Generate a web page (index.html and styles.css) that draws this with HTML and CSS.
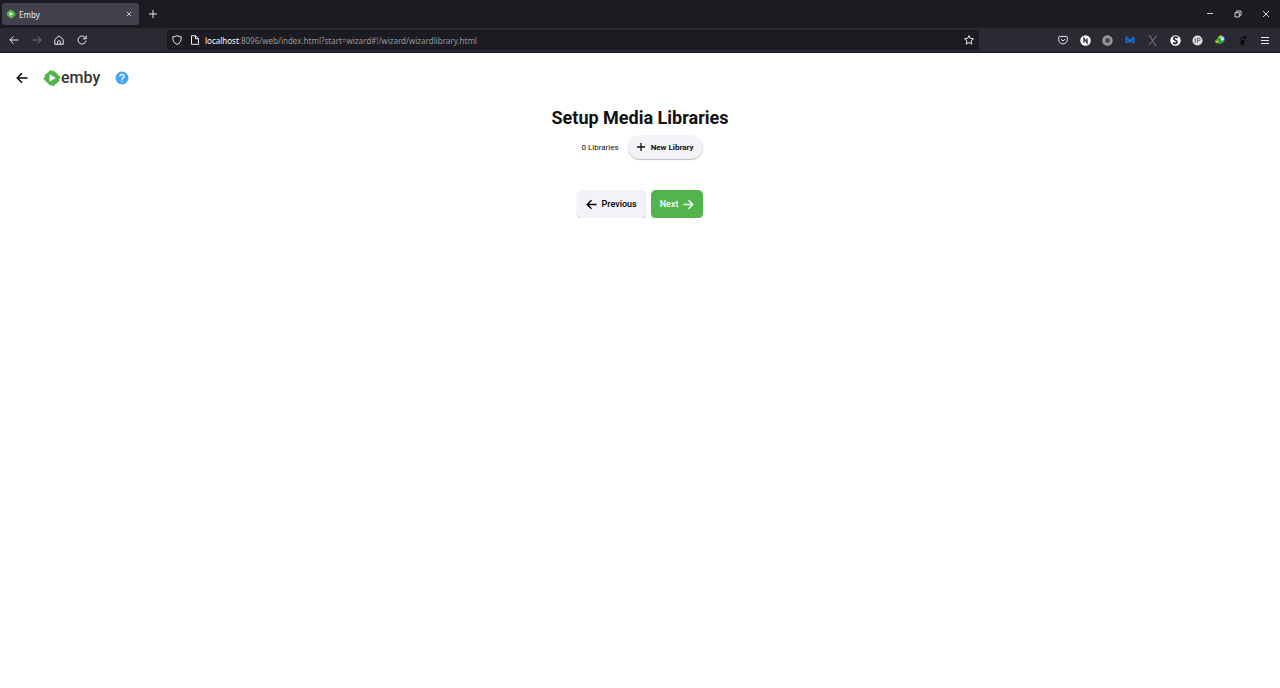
FILE: index.html
```html
<!DOCTYPE html>
<html lang="en">
<head>
<meta charset="utf-8">
<title>Emby</title>
<link rel="stylesheet" href="styles.css">
</head>
<body>
<div class="browser">
  <div class="tabbar">
    <div class="tab">
      <svg class="favicon" viewBox="0 0 20 20"><path fill="#52b54b" d="M8.800.8l2.100 2L12 1.700l7.800 7.700-2.200 2.200 1.100 1.100-7.500 6.700-2-2-1.100 1.100L.3 10.700l2.200-2.100-1.200-1.200z"/><path fill="#fff" d="M7.300 5.900v8l7-4z"/></svg>
      <span class="tab-title">Emby</span>
      <button class="tab-close" aria-label="Close tab"><svg class="i6" viewBox="0 0 6 6"><path d="M.8.8l4.400 4.400M5.200.8L.8 5.200"/></svg></button>
    </div>
    <button class="tab-new" aria-label="New tab"><svg class="i8" viewBox="0 0 8 8"><path d="M4 0v8M0 4h8"/></svg></button>
    <div class="window-controls">
      <button aria-label="Minimize"><svg class="i8" viewBox="0 0 8 8"><path d="M1 3.500h6"/></svg></button>
      <button aria-label="Restore"><svg class="i8" viewBox="0 0 8 8"><path d="M1 2.700h4.300V7H1zM2.700 2.500V1H7v4.300H5.500"/></svg></button>
      <button aria-label="Close"><svg class="i8" viewBox="0 0 8 8"><path d="M1 1l6 6M7 1L1 7"/></svg></button>
    </div>
  </div>
  <div class="toolbar">
    <div class="nav">
      <button aria-label="Back"><svg class="i10" viewBox="0 0 10 10"><path d="M9.500 5H.8M4.500 1.300L.8 5l3.700 3.700"/></svg></button>
      <button class="dim" aria-label="Forward"><svg class="i10" viewBox="0 0 10 10"><path d="M.5 5h8.700M5.500 1.300L9.200 5 5.500 8.700"/></svg></button>
      <button aria-label="Home"><svg class="i10" viewBox="0 0 10 10"><path d="M.8 9.300V4.500L5 .8l4.200 3.700v4.800zM3.600 9V6.400Q5 4.800 6.400 6.400V9"/></svg></button>
      <button aria-label="Reload"><svg class="i10" viewBox="0 0 10 10"><path d="M8.600 3.200A4 4 0 1 0 9 5.600M9.200.5v3.300H5.900"/></svg></button>
    </div>
    <div class="urlbar">
      <svg class="i10" viewBox="0 0 10 10"><path d="M5 .6q2 1.200 4.200 1.200Q9.600 7.500 5 9.500.4 7.500.8 1.800 3 1.800 5 .6z"/></svg>
      <svg class="i10 page-icon" viewBox="0 0 10 10"><path d="M1.500.7h4L8.500 3.600v5.700h-7zM5.500.8v3h3"/></svg>
      <label class="address"><span>localhost</span><input type="text" aria-label="Address" value=":8096/web/index.html?start=wizard#!/wizard/wizardlibrary.html"></label>
      <button aria-label="Bookmark"><svg class="i10" viewBox="0 0 10 10"><path d="M5 .6l1.300 2.900 3.200.3-2.400 2.100.7 3.200L5 7.500 2.200 9.100l.7-3.200L.5 3.800l3.200-.3z"/></svg></button>
    </div>
    <div class="extensions">
      <button aria-label="Pocket"><svg class="i10" viewBox="0 0 10 10"><path d="M1.500 1.400h7q.8 0 .8.800v2.400a4.300 4.300 0 0 1-8.600 0V2.200q0-.8.8-.8zM2.900 4.100L5 6l2.100-1.900"/></svg></button>
      <button aria-label="Notes"><svg class="i11" viewBox="0 0 12 12"><circle class="white" cx="6" cy="6" r="5.700"/><path class="ink" d="M4.300 8.500v-5l3.400 5v-5"/></svg></button>
      <button aria-label="Recorder"><svg class="i11" viewBox="0 0 12 12"><circle fill="#45444c" stroke="#979797" stroke-width="3" cx="6" cy="6" r="4.200"/></svg></button>
      <button aria-label="Malwarebytes"><svg class="i10" viewBox="0 0 10 10"><path class="blue" d="M2.200 8.200Q0 5.500 1.700 2.500L5 5.900l3.300-3.400Q10 5.500 7.800 8.200M3.500 4.500v3M6.500 4.500v3"/></svg></button>
      <button aria-label="X"><svg class="i11" viewBox="0 0 12 12"><path class="grey" d="M1.500 1h1.700L9 11h1.500M10.500 1L2 11"/></svg></button>
      <button aria-label="Stylus"><svg class="i11" viewBox="0 0 12 12"><circle class="white" cx="6" cy="6" r="5.700"/><path class="ink s" d="M8.500 3Q5 1.500 4 3.500c-.8 2 3.700 2.200 3.700 4S5 9.700 3.300 8.500"/></svg></button>
      <button aria-label="IP lookup"><svg class="i11" viewBox="0 0 12 12"><circle fill="#dedede" stroke="none" cx="6" cy="6" r="5.500"/><path stroke="#555" d="M3.500 3.500v5M5.800 8.500v-5h1.500q1.700 0 1.700 1.300T7.300 6.200H6"/></svg></button>
      <button aria-label="Download manager"><svg class="i10" viewBox="0 0 10 10"><circle fill="#327bd0" stroke="none" cx="6.300" cy="4.200" r="3.500"/><path fill="#e5e9e8" stroke="none" d="M5.500 2.500l3-.5L9 5 6.500 6z"/><path fill="#e1c51b" stroke="none" d="M3.500 1.500Q5.500 0 7.500 1L6 3 3 3.500z"/><path fill="#24a72d" stroke="none" d="M0 5.500l3-3L6 4 5 6l3.500.5L6 9 1 8.500 2.500 7z"/><path fill="#e1c51b" stroke="none" d="M0 6l3-.5L4 7 1 8z"/></svg></button>
      <button aria-label="Gnome"><svg class="i11" viewBox="0 0 12 12"><path fill="#0b0b0d" stroke="none" d="M10 1Q7 .5 6.500 2.800 7 5 9 3.800T10 1z"/><ellipse class="black" cx="5.200" cy="3.300" rx=".7" ry="1.200"/><ellipse class="black" cx="3.700" cy="4.300" rx=".6" ry="1"/><ellipse class="black" cx="2.500" cy="5.700" rx=".6" ry=".9"/><path fill="#0b0b0d" stroke="none" d="M3.300 7q2.200-2.500 4.800-1.500 1.500 1.400-.4 2.700Q9 9.800 7 11.200 4.500 12 4 9.500 3.800 8.300 3.300 7z"/></svg></button>
      <button aria-label="Menu"><svg class="i8" viewBox="0 0 8 8"><path d="M0 1.500h8M0 4.500h8M0 7.500h8"/></svg></button>
    </div>
  </div>
</div>
<header class="app-header">
  <button class="back" aria-label="Back"><svg class="i12 thick" viewBox="0 0 12 12"><path d="M11.500 6H1.500M6 1.300L1.300 6 6 10.700"/></svg></button>
  <a class="logo" href="#" aria-label="emby home"><svg class="logo-mark" viewBox="0 0 20 20"><path fill="#52b54b" d="M8.800.8l2.100 2L12 1.700l7.800 7.700-2.200 2.200 1.100 1.100-7.500 6.700-2-2-1.100 1.100L.3 10.700l2.200-2.100-1.200-1.200z"/><path fill="#fff" d="M7.300 5.900v8l7-4z"/></svg><span>emby</span></a>
  <a class="help" href="#" aria-label="Help"><svg class="help-icon" viewBox="0 0 14 14"><circle fill="#42a5f5" cx="7" cy="7" r="6.500"/><path fill="none" stroke="#fff" stroke-width="1.300" d="M4.900 5.500q0-2 2.100-2t2.100 1.900C9.100 6.800 7 6.800 7 8.700"/><path fill="#fff" d="M6.300 9.700h1.400v1.400H6.300z"/></svg></a>
</header>
<main class="wizard">
  <h1>Setup Media Libraries</h1>
  <div class="libraries">
    <span>0 Libraries</span>
    <button class="new-library"><svg class="i8" viewBox="0 0 8 8"><path d="M4 0v8M0 4h8"/></svg>New Library</button>
  </div>
  <div class="actions">
    <button class="step"><svg class="i11 thick" viewBox="0 0 12 12"><path d="M11.500 6H1.500M6 1.300L1.300 6 6 10.700"/></svg>Previous</button>
    <button class="step next">Next<svg class="i11 thick" viewBox="0 0 12 12"><path d="M.5 6h10M6 1.300L10.700 6 6 10.700"/></svg></button>
  </div>
</main>
</body>
</html>
```
FILE: styles.css
```css
* { box-sizing: border-box; }
body { margin: 0; background: #fff; color: #111; font-family: Roboto, sans-serif; }
button { display: flex; align-items: center; justify-content: center; padding: 0; border: 0; background: none; color: inherit; font: inherit; }
svg { display: block; flex: none; fill: none; stroke: currentColor; stroke-width: 1; }
a { color: inherit; text-decoration: none; }
.i6 { width: 6px; height: 6px; }
.i8 { width: 8px; height: 8px; }
.i10 { width: 10px; height: 10px; }
.i11 { width: 11px; height: 11px; }
.i12 { width: 12px; height: 12px; }
.thick { stroke-width: 1.5; }
.new-library svg { stroke-width: 1.3; }

.browser { background: #1c1b22; color: #e8e8ed; font-family: "Noto Sans", sans-serif; font-size: 8px; }
.tabbar { display: flex; align-items: center; height: 28px; padding-left: 2px; }
.tab { display: flex; align-items: center; width: 137px; height: 22px; padding: 0 4px; border-radius: 3px; background: #42414d; }
.favicon { width: 10px; height: 10px; stroke: none; }
.tab-title { flex: 1; margin-left: 3px; }
.tab-close { width: 12px; height: 12px; color: #c4c4ca; }
.tab-new { width: 28px; height: 22px; }
.window-controls { display: flex; margin-left: auto; color: #d0d0d5; }
.window-controls button { width: 28px; height: 28px; }
.toolbar { display: flex; align-items: center; height: 25px; padding: 0 4px 0 3px; background: #2b2a33; border-bottom: 1px solid #17161b; }
.nav { display: flex; justify-content: space-between; width: 90px; }
.nav button { width: 22px; height: 22px; }
.nav .dim { color: #77767d; }
.urlbar { display: flex; align-items: center; flex: 1; height: 20px; margin: 0 73px 0 74px; padding: 0 5px; border-radius: 3px; background: #1c1b22; }
.page-icon { margin-left: 8px; }
.address { display: flex; align-items: center; flex: 1; margin-left: 5px; color: #fbfbfe; }
.address input { flex: 1; min-width: 0; padding: 0; border: 0; outline: 0; background: none; color: #96959c; font: inherit; }
.extensions { display: flex; justify-content: space-between; width: 224px; }
.extensions button { width: 22px; height: 22px; }
.white { fill: #fff; stroke: none; }
.black { fill: #0b0b0d; stroke: none; }
.ink { stroke: #222; stroke-width: 1.3; }
.s { stroke-width: 1.8; }
.blue { stroke: #1b69c9; stroke-width: 1.8; }
.grey { stroke: #66656a; stroke-width: 1.3; }

.app-header { display: flex; align-items: center; height: 50px; padding: 0 16px; }
.back { width: 12px; height: 24px; color: #000; }
.logo { display: flex; align-items: center; margin-left: 15px; color: #333; font: 500 16px/20px Roboto, sans-serif; }
.logo-mark { width: 18px; height: 18px; stroke: none; }
.help { margin-left: 15px; }
.help-icon { width: 14px; height: 14px; stroke: none; }

.wizard { display: flex; flex-direction: column; align-items: center; padding-top: 3px; }
.wizard h1 { margin: 0; font-size: 18px; line-height: 24px; font-weight: 700; }
.libraries { display: flex; align-items: center; gap: 9px; margin-top: 5px; padding-left: 4px; font-size: 8px; }
.new-library { gap: 6px; height: 24px; padding: 0 9px; border-radius: 12px; background: #f2f2f7; font-weight: 700; box-shadow: 0 1px 1px #bbb; }
.actions { display: flex; gap: 5px; margin-top: 31px; }
.step { gap: 5px; height: 28px; padding: 0 9px; border-radius: 5px; background: #f2f2f7; font-size: 9px; font-weight: 500; box-shadow: 0 1px 1px #bbb; color: #000; }
.step.next { background: #52b54b; color: #fff; }
```
